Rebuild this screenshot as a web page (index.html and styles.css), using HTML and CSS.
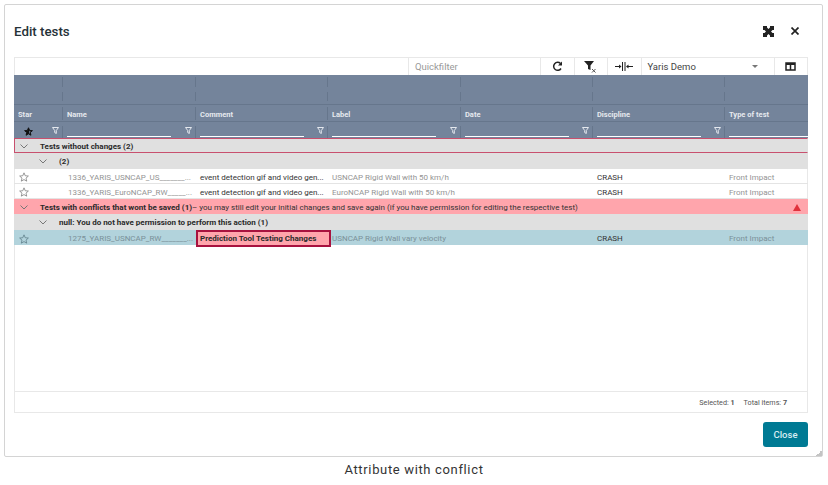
FILE: index.html
```html
<!DOCTYPE html>
<html lang="en">
<head>
    <meta charset="UTF-8">
    <title>Edit tests</title>
    <link rel="stylesheet" href="styles.css">
</head>
<body>
    <div class="dialog">
        <!-- Title bar -->
        <div class="dialog-head">
            <h2 class="dialog-title">Edit tests</h2>
            <svg class="head-icon" width="11" height="11" viewBox="0 0 11 11"><path fill="#222" d="M0 0h4v1.500L5.500 3 7 1.500V0h4v4H9.500L8 5.500 9.500 7H11v4H7V9.500L5.500 8 4 9.500V11H0V7h1.500L3 5.500 1.500 4H0z"/></svg>
            <svg class="head-icon close-icon" width="8" height="8" viewBox="0 0 8 8"><path stroke="#222" stroke-width="1.700" d="M.5.500l7 7M7.500.500l-7 7"/></svg>
        </div>

        <div class="grid">
            <!-- Toolbar -->
            <div class="toolbar">
                <div class="tool quickfilter">Quickfilter</div>
                <div class="tool tool-btn">
                    <svg width="11" height="11" viewBox="0 0 11 11"><path fill="none" stroke="#222" stroke-width="1.500" d="M9 7.500A4 4 0 1 1 8.500 2.500"/><path fill="#222" d="M10 0.500v4H6z"/></svg>
                </div>
                <div class="tool tool-btn">
                    <svg width="13" height="13" viewBox="0 0 13 13"><path fill="#222" d="M0 1h10L6.500 5.500V10L4 9V5.500z"/><path stroke="#555" stroke-width="1" d="M8 9l3.500 3.500M11.500 9L8 12.500"/></svg>
                </div>
                <div class="tool tool-btn">
                    <svg width="18" height="9" viewBox="0 0 18 9"><path fill="none" stroke="#222" stroke-width="1" d="M0 4.500h5.500M7.500 0v9M10 0v9M12 4.500h6"/><path fill="#222" d="M6.500 4.500l-2.500-2v4zM11 4.500l2.500-2v4z"/></svg>
                </div>
                <div class="tool profile-select">
                    <span>Yaris Demo</span>
                    <span class="select-arrow"></span>
                </div>
                <div class="tool tool-btn last-tool">
                    <svg width="11" height="9" viewBox="0 0 11 9"><path fill="none" stroke="#222" stroke-width="1.500" d="M1 1h9v7H1zM5.500 1v7"/><path stroke="#222" stroke-width="2" d="M1 2h9"/></svg>
                </div>
            </div>

            <!-- Column headers -->
            <div class="header">
                <div class="head-row head-empty">
                    <i></i><i></i><i></i><i></i><i></i><i></i><i></i>
                </div>
                <div class="head-row head-empty head-empty-last">
                    <i></i><i></i><i></i><i></i><i></i><i></i><i></i>
                </div>
                <div class="head-row head-titles">
                    <span>Star</span><span>Name</span><span>Comment</span><span>Label</span><span>Date</span><span>Discipline</span><span>Type of test</span>
                </div>
                <div class="head-row head-filters">
                    <div class="filter-cell star-filter">
                        <svg width="9" height="9" viewBox="0 0 24 24"><path fill="#111" stroke="#111" stroke-width="2.500" d="M12 2l3 7 7.500.7-5.700 5 1.700 7.300L12 18.200 5.500 22l1.700-7.300-5.700-5L9 9z"/><path fill="#74849b" d="M13.500 9.500l.800 1.500 4 .5-3 2.800.8 4-2.600-1.500z"/></svg>
                        <svg class="funnel" width="7" height="7" viewBox="0 0 7 7"><path fill="none" stroke="#e4e8ee" d="M.500.500h6L4.300 3.500v3l-1.600-1v-2z"/></svg>
                    </div>
                    <div class="filter-cell"><b></b><svg class="funnel" width="7" height="7" viewBox="0 0 7 7"><path fill="none" stroke="#e4e8ee" d="M.500.500h6L4.300 3.500v3l-1.600-1v-2z"/></svg></div>
                    <div class="filter-cell"><b></b><svg class="funnel" width="7" height="7" viewBox="0 0 7 7"><path fill="none" stroke="#e4e8ee" d="M.500.500h6L4.300 3.500v3l-1.600-1v-2z"/></svg></div>
                    <div class="filter-cell"><b></b><svg class="funnel" width="7" height="7" viewBox="0 0 7 7"><path fill="none" stroke="#e4e8ee" d="M.500.500h6L4.300 3.500v3l-1.600-1v-2z"/></svg></div>
                    <div class="filter-cell"><b></b><svg class="funnel" width="7" height="7" viewBox="0 0 7 7"><path fill="none" stroke="#e4e8ee" d="M.500.500h6L4.300 3.500v3l-1.600-1v-2z"/></svg></div>
                    <div class="filter-cell"><b></b><svg class="funnel" width="7" height="7" viewBox="0 0 7 7"><path fill="none" stroke="#e4e8ee" d="M.500.500h6L4.300 3.500v3l-1.600-1v-2z"/></svg></div>
                    <div class="filter-cell"><b></b></div>
                </div>
            </div>

            <!-- Rows -->
            <div class="body">
                <div class="group group-changed">
                    <svg class="chevron" width="8" height="5" viewBox="0 0 8 5"><path fill="none" stroke="#777" d="M.5.500L4 4 7.500.5"/></svg>
                    <span class="group-text">Tests without changes (2)</span>
                </div>
                <div class="group subgroup">
                    <svg class="chevron" width="8" height="5" viewBox="0 0 8 5"><path fill="none" stroke="#777" d="M.5.500L4 4 7.500.5"/></svg>
                    <span class="group-text">(2)</span>
                </div>
                <div class="row">
                    <span class="star"><svg width="10" height="10" viewBox="0 0 24 24"><path fill="none" stroke="#777" stroke-width="1.800" d="M12 2l3 7 7.500.7-5.700 5 1.700 7.300L12 18.200 5.500 22l1.700-7.300-5.700-5L9 9z"/></svg></span>
                    <span class="cell muted name-cell">1336_YARIS_USNCAP_US_______...</span>
                    <span class="cell dark">event detection gif and video gen...</span>
                    <span class="cell muted">USNCAP Rigid Wall with 50 km/h</span>
                    <span class="cell"></span>
                    <span class="cell dark">CRASH</span>
                    <span class="cell muted">Front Impact</span>
                </div>
                <div class="row">
                    <span class="star"><svg width="10" height="10" viewBox="0 0 24 24"><path fill="none" stroke="#777" stroke-width="1.800" d="M12 2l3 7 7.500.7-5.700 5 1.700 7.300L12 18.200 5.500 22l1.700-7.300-5.700-5L9 9z"/></svg></span>
                    <span class="cell muted name-cell">1336_YARIS_EuroNCAP_RW_____...</span>
                    <span class="cell dark">event detection gif and video gen...</span>
                    <span class="cell muted">EuroNCAP Rigid Wall with 50 km/h</span>
                    <span class="cell"></span>
                    <span class="cell dark">CRASH</span>
                    <span class="cell muted">Front Impact</span>
                </div>
                <div class="group group-conflict">
                    <svg class="chevron" width="8" height="5" viewBox="0 0 8 5"><path fill="none" stroke="#777" d="M.5.500L4 4 7.500.5"/></svg>
                    <span class="group-text">Tests with conflicts that wont be saved (1)</span>
                    <span class="conflict-note">&ndash; you may still edit your initial changes and save again (if you have permission for editing the respective test)</span>
                    <svg class="warn" width="8" height="7" viewBox="0 0 8 7"><path fill="#e0313c" d="M4 0l4 7H0z"/></svg>
                </div>
                <div class="group subgroup">
                    <svg class="chevron" width="8" height="5" viewBox="0 0 8 5"><path fill="none" stroke="#777" d="M.5.500L4 4 7.500.5"/></svg>
                    <span class="group-text">null: You do not have permission to perform this action (1)</span>
                </div>
                <div class="row row-selected">
                    <span class="star"><svg width="10" height="10" viewBox="0 0 24 24"><path fill="none" stroke="#5a7a85" stroke-width="1.800" d="M12 2l3 7 7.500.7-5.700 5 1.700 7.300L12 18.200 5.500 22l1.700-7.300-5.700-5L9 9z"/></svg></span>
                    <span class="cell muted name-cell">1275_YARIS_USNCAP_RW_______...</span>
                    <span class="cell conflict-cell">Prediction Tool Testing Changes</span>
                    <span class="cell muted">USNCAP Rigid Wall vary velocity</span>
                    <span class="cell"></span>
                    <span class="cell dark">CRASH</span>
                    <span class="cell muted">Front Impact</span>
                </div>
            </div>

            <!-- Footer -->
            <div class="grid-foot">
                <span>Selected: <b>1</b></span>
                <span>Total items: <b>7</b></span>
            </div>
        </div>

        <div class="dialog-foot">
            <button class="close-btn">Close</button>
        </div>
        <span class="resize-grip"></span>
    </div>
    <p class="caption">Attribute with conflict</p>
</body>
</html>
```

FILE: styles.css
```css
/* Basic Styles */
body {
    margin: 0;
    width: 828px;
    height: 485px;
    overflow: hidden;
    background-color: #fff;
    font-family: Roboto, "Liberation Sans", sans-serif;
    color: #222;
}

.dialog {
    position: relative;
    box-sizing: border-box;
    width: 819px;
    height: 453px;
    margin: 4px 0 0 4px;
    padding: 0 14px 0 9px;
    border: 1px solid #d4d4d4;
    border-radius: 2px;
    background-color: #fff;
}

/* Title bar */
.dialog-head {
    display: flex;
    align-items: center;
    height: 52px;
    padding-right: 9px;
}

.dialog-title {
    flex: 1;
    margin: 0;
    font-size: 13.300px;
    font-weight: 500;
    color: #263238;
}

.close-icon {
    margin-left: 17px;
}

/* Grid */
.grid {
    width: 794px;
    height: 356px;
    box-sizing: border-box;
    display: flex;
    flex-direction: column;
    border-right: 1px solid #e8e8e8;
    border-bottom: 1px solid #e8e8e8;
    border-left: 1px solid #e8e8e8;
}

.toolbar {
    display: flex;
    justify-content: flex-end;
    height: 18px;
    box-sizing: border-box;
    margin: 0 -1px;
    border-top: 1px solid #e8e8e8;
}

.tool {
    display: flex;
    align-items: center;
    box-sizing: border-box;
    border-left: 1px solid #e8e8e8;
    font-size: 9.500px;
}

.tool-btn {
    justify-content: center;
    width: 33.500px;
}

.last-tool {
    width: 34.500px;
    border-right: 1px solid #e8e8e8;
}

.quickfilter {
    width: 132px;
    padding-left: 6px;
    padding-bottom: 1px;
    color: #999;
}

.profile-select {
    justify-content: space-between;
    width: 133px;
    padding: 0 16px 1px 6px;
    color: #444;
}

.select-arrow {
    width: 0;
    height: 0;
    border-top: 3px solid #777;
    border-left: 3px solid transparent;
    border-right: 3px solid transparent;
}

/* Header */
.header {
    margin: 0 -1px;
    background-color: #74849b;
}

.head-row {
    display: grid;
    grid-template-columns: 49px 133px 132px 133px 132px 132px 83px;
}

.head-empty {
    box-sizing: border-box;
    height: 15px;
}

.head-empty-last {
    border-bottom: 1px solid #66768c;
}

.head-empty i {
    display: block;
    margin: 2px 0 3px;
    border-right: 1px solid #66768c;
}

.head-empty i:last-child {
    border-right: none;
}

.head-titles {
    height: 17px;
    box-sizing: border-box;
    border-bottom: 1px solid #66768c;
}

.head-titles span {
    display: flex;
    align-items: center;
    margin: 2px 0 1px;
    padding-top: 2px;
    padding-left: 4px;
    border-right: 1px solid #66768c;
    font-size: 7.500px;
    font-weight: 700;
    color: #e6e9ee;
}

.head-titles span:last-child {
    border-right: none;
}

.filter-cell {
    position: relative;
    display: flex;
    align-items: flex-start;
    height: 16px;
    background: linear-gradient(#66768c, #66768c) right bottom / 1px 12px no-repeat;
}

.filter-cell:last-child {
    background: none;
}

.filter-cell b {
    display: block;
    box-sizing: border-box;
    width: 104px;
    height: 15px;
    margin-left: 4px;
    border-bottom: 1px solid #fff;
}

.funnel {
    position: absolute;
    right: 4px;
    top: 5px;
}

.star-filter svg:first-child {
    margin: 5px 0 0 10px;
}

/* Rows */
.group {
    display: flex;
    align-items: center;
    box-sizing: border-box;
    height: 16px;
    padding-left: 6px;
    background-color: #e0e0e0;
    font-size: 8px;
}

.chevron {
    flex: none;
    margin-right: 12px;
}

.group-text {
    font-weight: 700;
    color: #2a2a2a;
}

.group-changed {
    height: 15px;
    padding-top: 1px;
    border: 1px solid #c8506e;
    border-right-color: transparent;
    padding-left: 5px;
}

.subgroup {
    padding-left: 25px;
}

.group-conflict {
    height: 15px;
    padding-top: 1px;
    background-color: #ffa5ac;
}

.conflict-note {
    flex: 1;
    color: #333;
}

.warn {
    margin-right: 7px;
}

.body {
    flex: 1;
    margin: 0 -1px;
}

.row {
    display: grid;
    grid-template-columns: 49px 133px 132px 133px 132px 132px 83px;
    align-items: center;
    box-sizing: border-box;
    height: 15px;
    padding-top: 2px;
    border-bottom: 1px solid #e4e4e4;
    font-size: 8px;
}

.row-selected {
    padding-top: 0;
    background-color: #b2d3dc;
    border-bottom: none;
}

.star {
    display: flex;
    padding-left: 5px;
}

.cell {
    overflow: hidden;
    padding-left: 4px;
    white-space: nowrap;
}

.muted {
    color: #949494;
}

.row-selected .muted {
    color: #7a9199;
}

.dark {
    color: #333;
}

.name-cell {
    padding-left: 5px;
}

.conflict-cell {
    height: 17px;
    box-sizing: border-box;
    padding-left: 2px;
    margin-right: -3px;
    line-height: 13px;
    border: 2px solid #a8123f;
    background-color: #ffa5ac;
    font-weight: 700;
    color: #2a2a2a;
}

/* Footer */
.grid-foot {
    display: flex;
    justify-content: flex-end;
    align-items: center;
    gap: 9px;
    height: 20px;
    padding-right: 20px;
    border-top: 1px solid #e8e8e8;
    font-size: 7.200px;
    color: #555;
}

.dialog-foot {
    display: flex;
    justify-content: flex-end;
    width: 794px;
    margin-top: 9px;
}

.close-btn {
    width: 45px;
    height: 25px;
    padding: 0;
    border: none;
    border-radius: 3px;
    background-color: #007a94;
    color: #d8edf2;
    font-family: Roboto, "Liberation Sans", sans-serif;
    font-size: 9.500px;
    font-weight: 500;
}

.resize-grip {
    position: absolute;
    right: 0;
    bottom: 0;
    width: 6px;
    height: 6px;
    background-image: linear-gradient(135deg, transparent 50%, #c4c4c4 50%);
}

.caption {
    margin: 5px 0 0;
    width: 828px;
    text-align: center;
    font-size: 13px;
    letter-spacing: 0.650px;
    color: #333;
}
```
